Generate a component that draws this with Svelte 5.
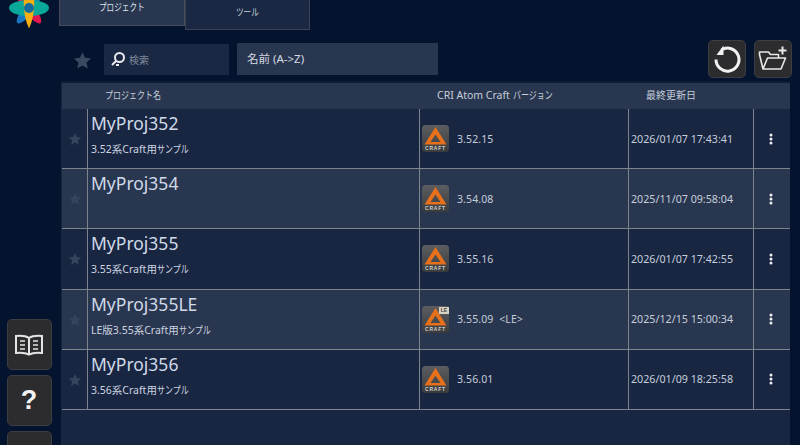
<script>
  const rows = [
    { name: 'MyProj352', pre: '3.52系Craft用', ver: '3.52.15', date: '2026/01/07 17:43:41' },
    { name: 'MyProj354', pre: '', ver: '3.54.08', date: '2025/11/07 09:58:04' },
    { name: 'MyProj355', pre: '3.55系Craft用', ver: '3.55.16', date: '2026/01/07 17:42:55' },
    { name: 'MyProj355LE', pre: 'LE版3.55系Craft用', ver: '3.55.09 <LE>', date: '2025/12/15 15:00:34', le: true },
    { name: 'MyProj356', pre: '3.56系Craft用', ver: '3.56.01', date: '2026/01/09 18:25:58' }
  ];
</script>

{#snippet star(size)}
  <svg width={size} height={size} viewBox="0 0 24 24"><path d="M12 1.500l3.200 7.100 7.600.8-5.700 5.100 1.600 7.600L12 18.200l-6.700 3.900 1.600-7.600L1.200 9.400l7.600-.8z" fill="currentColor"/></svg>
{/snippet}

{#snippet kana(text)}
  <span class="kana" style="--n:{text.length}">{text}</span>
{/snippet}

<div class="app">
  <aside class="side">
    <svg class="logo" width="42" height="30" viewBox="0 0 42 30">
      <ellipse cx="21" cy="8" rx="5.500" ry="19" fill="#1a78c2" transform="rotate(37 21 8)"/>
      <ellipse cx="21" cy="8" rx="5.500" ry="19" fill="#e0184f" transform="rotate(-37 21 8)"/>
      <ellipse cx="21" cy="8" rx="20" ry="8" fill="#0aa89a"/>
      <path d="M21 -16C28 -8 28 14 21 28.500C14 14 14 -8 21 -16z" fill="#f5b014"/>
      <circle cx="21" cy="8" r="5" fill="#156a9f"/>
    </svg>
    <div class="side-btns">
      <button class="ibtn side-btn" aria-label="マニュアル">
        <svg width="30" height="24" viewBox="0 0 30 24" fill="none" stroke="#e4e4e4" stroke-width="2"><path d="M15 5C12 3 7 2.500 2 3v17c5-.5 10 0 13 1.500 3-1.500 8-2 13-1.500V3c-5-.5-10 0-13 2zM15 5v16"/><path d="M6 8h5M6 12h5M6 16h5M19 8h5M19 12h5M19 16h5" stroke-width="1.600"/></svg>
      </button>
      <button class="ibtn side-btn q">?</button>
      <button class="ibtn side-btn" aria-label="その他"></button>
    </div>
  </aside>

  <main class="main">
    <nav class="tabs">
      <div class="tab on">{@render kana('プロジェクト')}</div>
      <div class="tab off">{@render kana('ツール')}</div>
    </nav>

    <div class="toolbar">
      <span class="fav">{@render star(19)}</span>
      <div class="search">
        <svg width="16" height="16" viewBox="0 0 16 16" fill="none" stroke="#e8eaee" stroke-width="2"><circle cx="9.500" cy="6.500" r="4.500"/><path d="M6 10l-4 4M6 14h3" /></svg>
        <span>検索</span>
      </div>
      <div class="sort">名前 (A-&gt;Z)</div>
      <div class="spacer"></div>
      <button class="ibtn top-btn" aria-label="更新">
        <svg width="30" height="30" viewBox="0 0 30 30" fill="none" stroke="#f2f2f2" stroke-width="3"><path d="M9.500 5.800A11.500 11.500 0 1 1 4 15.500"/><path d="M11.500 1.500v9.500H4.500z" fill="#f2f2f2" stroke="none"/></svg>
      </button>
      <button class="ibtn top-btn" aria-label="フォルダを追加">
        <svg width="30" height="28" viewBox="0 0 30 28" fill="none" stroke="#e8e8e8" stroke-width="1.600"><path d="M5 24L1.500 9.500V7h9l2 2.500h8V13M5 24h18l4.500-11H9.500z" stroke-linejoin="round"/><path d="M24.500 1.500v8M20.500 5.500h8" stroke-width="2"/></svg>
      </button>
    </div>

    <section class="table">
      <div class="head">
        <span class="h-name">{@render kana('プロジェクト名')}</span>
        <span class="h-ver">CRI Atom Craft {@render kana('バージョン')}</span>
        <span class="h-date">最終更新日</span>
      </div>
      {#each rows as r, i}
        <div class="row" class:alt={i % 2 === 1}>
          <div class="c c-star">{@render star(14)}</div>
          <div class="c c-name">
            <div class="name">{r.name}</div>
            <div class="desc">{r.pre}{#if r.pre}{@render kana('サンプル')}{/if}</div>
          </div>
          <div class="c c-ver">
            <span class="craft">
              <svg width="27" height="27" viewBox="0 0 27 27">
                <defs><linearGradient id="cg{i}" x1="0" y1="0" x2="0" y2="1"><stop offset="0" stop-color="#5c5d60"/><stop offset="1" stop-color="#3a3b3d"/></linearGradient></defs>
                <rect width="27" height="27" rx="3.500" fill="url(#cg{i})"/>
                <path fill-rule="evenodd" d="M13.500 2L24.500 19.500H2.500zM13.500 9.500L8.500 17H18.500z" fill="#e8701a"/>
              </svg>
              <span class="ctext">CRAFT</span>
              {#if r.le}<span class="le">LE</span>{/if}
            </span>
            <span class="ver">{r.ver}</span>
          </div>
          <div class="c c-date">{r.date}</div>
          <div class="c c-menu"><svg width="4" height="12" viewBox="0 0 4 12"><circle cx="2" cy="2" r="1.500" fill="#eef0f4"/><circle cx="2" cy="6" r="1.500" fill="#eef0f4"/><circle cx="2" cy="10" r="1.500" fill="#eef0f4"/></svg></div>
        </div>
      {/each}
    </section>
  </main>
</div>

<style>
  :global(body) { margin: 0; background: #04142f; }
  .app {
    width: 800px; height: 445px; overflow: hidden; display: flex;
    background: #04142f; color: #c9d3e2;
    font-family: "Noto Sans", "Noto Sans CJK JP", sans-serif;
  }
  .kana {
    display: inline-block; transform: scaleX(.76); transform-origin: left;
    margin-right: calc(var(--n) * -0.24em); white-space: nowrap;
  }
  .side { width: 61px; flex: none; display: flex; flex-direction: column; align-items: center; position: relative; }
  .logo { position: absolute; left: 8px; top: 0; }
  .side-btns { margin-top: 319px; padding-right: 3px; display: flex; flex-direction: column; gap: 5px; }
  .ibtn {
    display: flex; align-items: center; justify-content: center; padding: 0;
    background: #2c2c2e; border: 1px solid #3d3e42; border-radius: 5px; color: #eee;
  }
  .side-btn { width: 45px; height: 51px; }
  .q { font: bold 27px "Liberation Sans", sans-serif; color: #f2f2f2; }
  .main { flex: 1; min-width: 0; display: flex; flex-direction: column; }
  .tabs { display: flex; align-items: flex-start; margin-left: -2px; height: 42px; }
  .tab { font-size: 10px; text-align: center; box-sizing: border-box; }
  .tab.on { width: 126px; height: 26px; line-height: 14px; background: #29364f; border: 1px solid #454b58; border-top: 0; color: #dfe4ec; }
  .tab.off { width: 125px; height: 30px; line-height: 24px; background: #1a2843; border: 1px solid #3a4354; border-top: 0; color: #c9d0dc; }
  .toolbar { display: flex; align-items: center; height: 34px; padding-right: 8px; }
  .fav { width: 43px; height: 19px; display: flex; justify-content: center; color: #3a4860; padding-top: 2px; }
  .search {
    width: 125px; height: 31px; background: #1a2843; display: flex; align-items: center; gap: 3px;
    box-sizing: border-box; padding-left: 6px; font-size: 10px; color: #7f8a9c;
  }
  .sort { width: 201px; height: 32px; margin-left: 8px; background: #29364f; font-size: 11.500px; line-height: 31px; padding-left: 10px; box-sizing: border-box; color: #d5dbe5; }
  .spacer { flex: 1; }
  .top-btn { width: 38px; height: 38px; margin-left: 8px; }
  .table { margin-top: 5px; width: 729px; flex: 1; background: #192641; border-top: 2px solid #0f1c36; box-sizing: border-box; }
  .head { height: 26px; background: #29364f; position: relative; font-size: 10.500px; line-height: 25px; color: #c5cedb; margin-left: 1px; }
  .head span.h-name, .head span.h-ver, .head span.h-date { position: absolute; top: 0; white-space: nowrap; }
  .h-name { left: 43px; }
  .h-ver { left: 375px; }
  .h-date { left: 584px; font-size: 10px; }
  .row {
    display: grid; grid-template-columns: 26px 332px 209px 125px 36px; height: 60.200px; margin-left: 1px;
    border-bottom: 1px solid #7e848c; box-sizing: border-box; background: #192641;
  }
  .row.alt { background: #29364f; }
  .c { border-right: 1px solid #7e848c; display: flex; align-items: center; box-sizing: border-box; min-width: 0; }
  .c:last-child { border-right: 0; }
  .c-star { justify-content: center; color: #35435b; padding-top: 1px; }
  .c-name { flex-direction: column; align-items: flex-start; padding-left: 3px; }
  .name { font-size: 17.500px; line-height: 24px; margin-top: 2px; color: #d0dae8; }
  .desc { font-size: 10.500px; line-height: 14px; margin-top: 7px; color: #ccd4e0; min-height: 14px; white-space: nowrap; }
  .c-ver { padding-left: 2px; }
  .craft { position: relative; width: 27px; height: 27px; display: block; }
  .craft svg { display: block; }
  .ctext { position: absolute; left: 0; right: 0; top: 20px; text-align: center; font: bold 5px/6px "Liberation Sans", sans-serif; color: #d0d0d0; letter-spacing: .8px; }
  .le { position: absolute; right: 0; top: 1px; width: 10px; height: 7px; background: #d8d2c0; color: #444; font: bold 5px/7px "Liberation Sans", sans-serif; text-align: center; }
  .ver { margin-left: 8px; font-size: 10.500px; color: #c5cedb; word-spacing: 3px; letter-spacing: .1px; }
  .c-date { padding-left: 2px; font-size: 10.700px; color: #c5cedb; white-space: nowrap; }
  .c-menu { justify-content: center; padding-right: 3px; }
</style>
